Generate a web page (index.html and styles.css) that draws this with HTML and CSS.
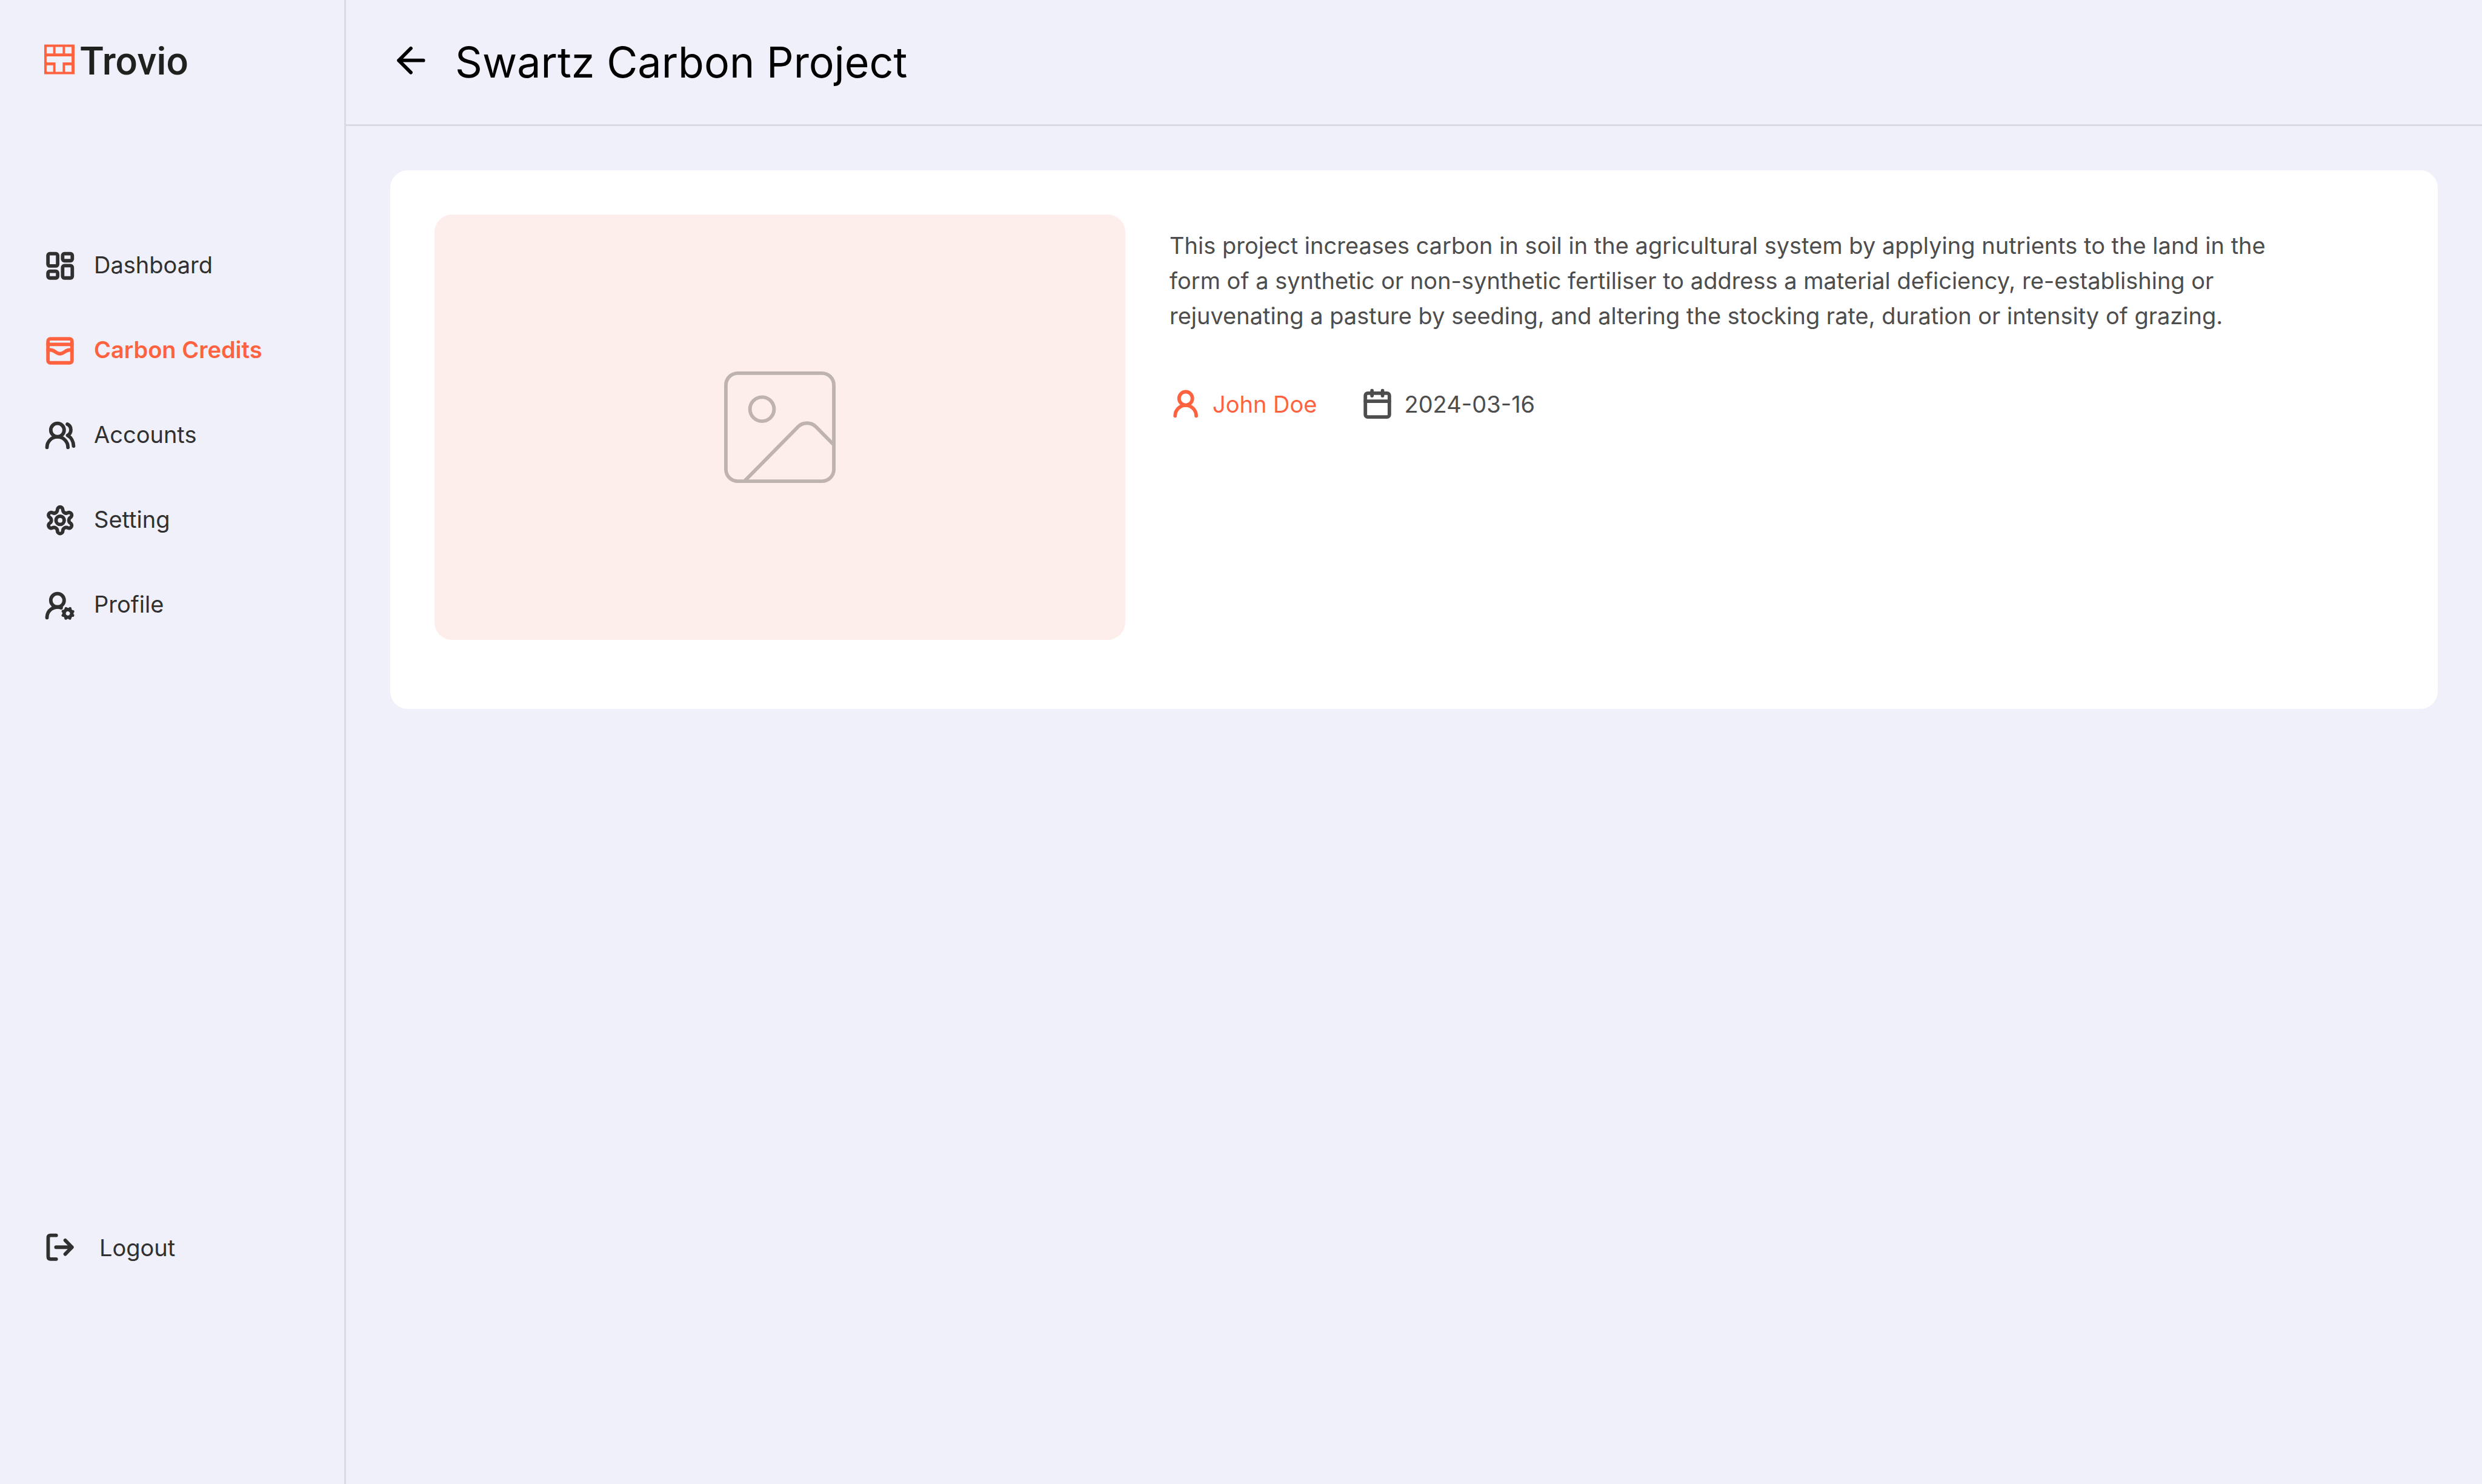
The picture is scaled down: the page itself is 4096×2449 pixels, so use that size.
FILE: index.html
```html
<!DOCTYPE html>
<html lang="en">
<head>
<meta charset="utf-8">
<meta name="viewport" content="width=device-width, initial-scale=1">
<title>Swartz Carbon Project – Trovio</title>
<link rel="stylesheet" href="styles.css">
</head>
<body>
<div class="app">
  <aside class="sidebar">
    <a class="brand" href="#">
      <svg class="brand-mark" viewBox="0 0 51 50" aria-hidden="true"><path fill-rule="evenodd" d="M0 0H51V50H0ZM4 4V15H15V4ZM19 4V15H31V4ZM35 4V15H46V4ZM4 20V30H19V46H31V30H46V20ZM4 35V46H15V35ZM35 35V46H46V35Z"/></svg>
      <span class="brand-name">Trovio</span>
    </a>
    <nav class="nav" aria-label="Main">
      <a class="nav-item" href="#">
        <svg class="icon" viewBox="0 0 60 60" aria-hidden="true"><rect x="9.5" y="11" width="16.5" height="21" rx="3"/><rect x="34.5" y="11" width="16.5" height="12" rx="3"/><rect x="9.5" y="41" width="16.5" height="11.5" rx="3"/><rect x="34.5" y="31.5" width="16.5" height="21" rx="3"/></svg>
        <span>Dashboard</span>
      </a>
      <a class="nav-item nav-item-active" href="#" aria-current="page">
        <svg class="icon" viewBox="0 0 60 60" aria-hidden="true"><rect x="9.5" y="11.5" width="41" height="41" rx="4"/><path d="M9.5 21H50.5M9.5 30.5H14C21 30.5 23 37 30 37S39 30.5 46 30.5H50.5"/></svg>
        <span>Carbon Credits</span>
      </a>
      <a class="nav-item" href="#">
        <svg class="icon" viewBox="0 0 60 60" aria-hidden="true"><circle cx="25.7" cy="22.4" r="11.4"/><path d="M7.8 52A17.9 17.9 0 0 1 43.6 52M42.5 12.4C50.5 16 50.5 28 43 31.6C49 35 53 42 53.2 49.7"/></svg>
        <span>Accounts</span>
      </a>
      <a class="nav-item" href="#">
        <svg class="icon" viewBox="0 0 60 60" aria-hidden="true"><g transform="translate(30.2 31.7)"><circle r="7"/><path d="M-4.6 -18.1A4.6 4.6 0 0 1 4.6 -18.1A5.8 5.8 0 0 0 13.4 -13A4.6 4.6 0 0 1 18 -5.1A5.8 5.8 0 0 0 18 5.1A4.6 4.6 0 0 1 13.4 13A5.8 5.8 0 0 0 4.6 18.1A4.6 4.6 0 0 1 -4.6 18.1A5.8 5.8 0 0 0 -13.4 13A4.6 4.6 0 0 1 -18 5.1A5.8 5.8 0 0 0 -18 -5.1A4.6 4.6 0 0 1 -13.4 -13A5.8 5.8 0 0 0 -4.6 -18.1Z"/></g></svg>
        <span>Setting</span>
      </a>
      <a class="nav-item" href="#">
        <svg class="icon" viewBox="0 0 60 60" aria-hidden="true"><circle cx="25.7" cy="23.5" r="11.4"/><path d="M7.8 53A17.9 17.9 0 0 1 32 36.2"/><g transform="translate(43.5 45.8) rotate(22.5)"><circle r="6.5"/><circle r="9" stroke-width="5" stroke-dasharray="0 7.069"/></g></svg>
        <span>Profile</span>
      </a>
    </nav>
    <button class="logout" type="button">
      <svg class="icon" viewBox="0 0 60 60" aria-hidden="true"><path d="M23.5 9H14Q9.8 9 9.8 13.2V45.3Q9.8 49.5 14 49.5H23.5M23.2 29.2H50.5M38.9 17.5L50.5 29.2L38.9 41"/></svg>
      <span>Logout</span>
    </button>
  </aside>
  <main class="main">
    <header class="header">
      <button class="back" type="button" aria-label="Back"><svg class="icon" viewBox="0 0 60 60" aria-hidden="true"><path d="M30 6L9.4 26.6L30 47.2M9.4 26.6H51.4"/></svg></button>
      <h1 class="title">Swartz Carbon Project</h1>
    </header>
    <section class="card">
      <div class="cover">
        <svg class="cover-icon" viewBox="82 91 565 565" aria-hidden="true"><rect x="91" y="100" width="547" height="547" rx="60"/><circle cx="274" cy="282" r="61"/><path d="M187 645L458 370C482 347 522 347 546 370L636 461"/></svg>
      </div>
      <div class="details">
        <p class="description">This project increases carbon in soil in the agricultural system by applying nutrients to the land in the form of a synthetic or non-synthetic fertiliser to address a material deficiency, re-establishing or rejuvenating a pasture by seeding, and altering the stocking rate, duration or intensity of grazing.</p>
        <div class="meta">
          <a class="meta-item author" href="#">
            <svg class="icon" viewBox="0 0 60 60" aria-hidden="true"><circle cx="27.7" cy="20.2" r="11.4"/><path d="M9.6 50A18 18 0 0 1 45.6 50"/></svg>
            <span>John Doe</span>
          </a>
          <time class="meta-item" datetime="2024-03-16">
            <svg class="icon" viewBox="0 0 60 60" aria-hidden="true"><rect x="7.5" y="11.2" width="41" height="40.7" rx="4"/><path d="M7.5 24.9H48.5M18.8 6.9V15.5M36.8 6.9V15.5"/></svg>
            <span>2024-03-16</span>
          </time>
        </div>
      </div>
    </section>
  </main>
</div>
</body>
</html>
```
FILE: styles.css
```css
* { box-sizing: border-box; }

body {
  margin: 0;
  background: #f0f0fb;
  color: #303030;
  font: 400 38px/58px Inter, "Liberation Sans", sans-serif;
  font-optical-sizing: none;
}

a { color: inherit; text-decoration: none; }
button { font: inherit; color: inherit; background: none; border: 0; padding: 0; cursor: pointer; }
svg { display: block; flex: none; }

.icon {
  width: 58px;
  height: 58px;
  fill: none;
  stroke: currentColor;
  stroke-width: 6;
  stroke-linecap: round;
  stroke-linejoin: round;
}

.app { display: flex; min-height: 100vh; }

/* Sidebar */
.sidebar {
  display: flex;
  flex-direction: column;
  flex: none;
  width: 571px;
  padding: 73px 70px 361px;
  border-right: 3px solid #dadae4;
}
.brand { display: flex; align-items: baseline; gap: 9px; height: 51px; padding-left: 3px; }
.brand-mark { width: 50px; height: 50px; fill: #ff623f; }
.brand-name { color: #1f211e; font: 500 64px/48px Roboto, "Liberation Sans", sans-serif; }
.nav { display: grid; gap: 82px; margin-top: 284px; }
.nav-item, .logout { display: flex; align-items: center; gap: 27px; }
.nav-item-active { color: #ff623f; font-weight: 600; }
.logout { gap: 36px; margin-top: auto; }

/* Page header */
.main { flex: 1; min-width: 0; }
.header {
  display: flex;
  align-items: center;
  gap: 44px;
  height: 208px;
  padding-left: 78px;
  border-bottom: 3px solid #dadae4;
  color: #000;
}
.title { margin: 0; font-size: 70px; line-height: 88px; font-weight: 400; }

/* Project card */
.card {
  display: flex;
  gap: 73px;
  margin: 73px;
  padding: 73px 73px 114px;
  background: #fff;
  border-radius: 29px;
  color: #4d4d4d;
}
.cover {
  display: grid;
  place-items: center;
  flex: none;
  width: 1140px;
  height: 702px;
  background: #feeeeb;
  border-radius: 29px;
}
.cover-icon { width: 184px; height: 184px; fill: none; stroke: #bfb3b1; stroke-width: 18; }
.description { margin: 22px 0 88px; max-width: 1860px; }
.meta { display: flex; gap: 73px; }
.meta-item { display: flex; gap: 13px; }
.author { color: #ff623f; }
```
